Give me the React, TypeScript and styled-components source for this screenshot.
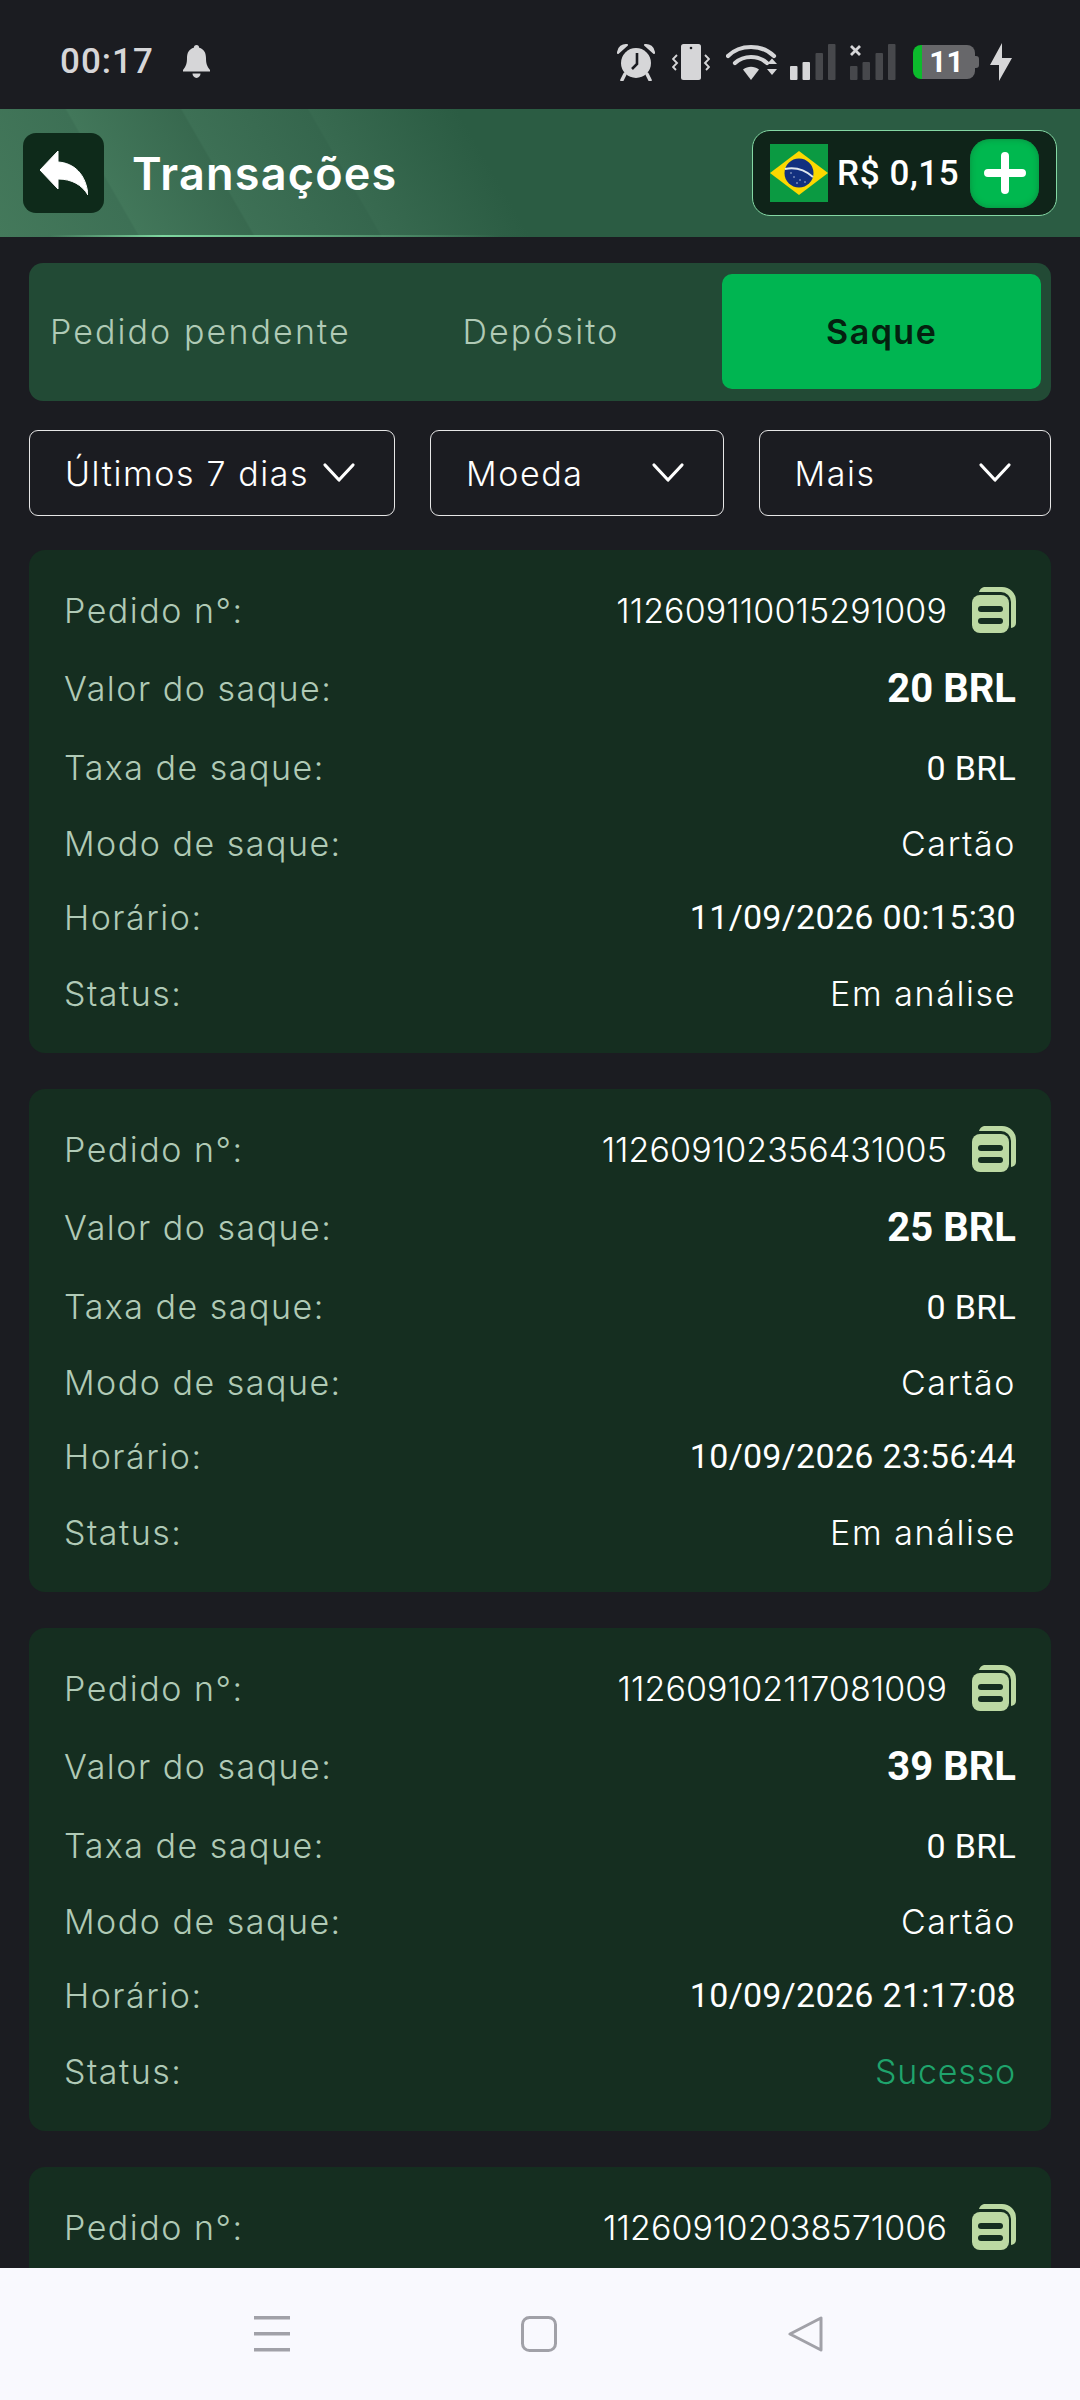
import React from 'react';
import styled, { createGlobalStyle } from 'styled-components';

const UI_FONT = '"Inter", "Noto Sans", sans-serif';
const NUM_FONT = 'Roboto, "Liberation Sans", sans-serif';

const GlobalStyle = createGlobalStyle`
  html, body {
    margin: 0;
    padding: 0;
    background: #1b1c21;
  }
  * {
    box-sizing: border-box;
  }
`;

const Page = styled.div`
  width: 1080px;
  height: 2400px;
  display: flex;
  flex-direction: column;
  overflow: hidden;
  background: #1b1c21;
  font-family: ${UI_FONT};
`;

const StatusBar = styled.div`
  height: 109px;
  flex: none;
  display: flex;
  align-items: center;
  justify-content: space-between;
  padding: 14px 68px 0 60px;
  color: #d6d6d8;
`;

const StatusLeft = styled.div`
  display: flex;
  align-items: center;
  gap: 29px;
`;

const Clock = styled.span`
  font-family: ${NUM_FONT};
  font-weight: 500;
  font-size: 35px;
  letter-spacing: 1px;
`;

const StatusIcons = styled.div`
  display: flex;
  align-items: center;
`;

const StatusSlot = styled.span<{ $left?: number }>`
  display: flex;
  margin-left: ${(p) => p.$left ?? 0}px;
`;

const BatteryBox = styled.div`
  position: relative;
  width: 62px;
  height: 34px;
  border-radius: 8px;
  background: linear-gradient(90deg, #0cbb2c 0, #0cbb2c 9px, #67676a 9px);
  display: flex;
  align-items: center;
  justify-content: center;
  margin-right: 3px;
  color: #fff;
  font-family: ${NUM_FONT};
  font-weight: 700;
  font-size: 30px;
  padding-left: 5px;

  &::after {
    content: '';
    position: absolute;
    right: -4px;
    top: 11px;
    width: 4px;
    height: 12px;
    border-radius: 0 3px 3px 0;
    background: #67676a;
  }
`;

const Header = styled.div`
  position: relative;
  height: 128px;
  flex: none;
  display: flex;
  align-items: center;
  justify-content: space-between;
  padding: 0 23px;
  background: linear-gradient(60deg,
    #44795b 0,
    #3d7055 12%,
    #42775a 12.2%,
    #38694f 22%,
    #3d7055 22.2%,
    #35664d 33%,
    #386a50 33.2%,
    #2b5c43 46%,
    #2b5c43 100%);

  &::after {
    content: '';
    position: absolute;
    left: 50px;
    bottom: 0;
    width: 450px;
    height: 2px;
    background: linear-gradient(90deg, transparent, #7fd6a0 25%, transparent);
  }
`;

const HeaderLeft = styled.div`
  display: flex;
  align-items: center;
  gap: 28px;
`;

const BackButton = styled.button`
  width: 81px;
  height: 80px;
  border: none;
  padding: 0;
  border-radius: 13px;
  background: #0e2a1a;
  display: flex;
  align-items: center;
  justify-content: center;
`;

const Title = styled.h1`
  margin: 0;
  color: #fff;
  font-size: 45px;
  font-weight: 600;
  letter-spacing: 1.2px;
`;

const Wallet = styled.div`
  width: 305px;
  height: 86px;
  display: flex;
  align-items: center;
  padding: 0 17px;
  border: 1.5px solid #84d8a4;
  border-radius: 18px;
  background: #0f2419;
`;

const WalletAmount = styled.span`
  flex: 1;
  margin-left: 9px;
  color: #fff;
  font-family: ${NUM_FONT};
  font-weight: 500;
  font-size: 35px;
  letter-spacing: 0.6px;
  white-space: nowrap;
`;

const PlusButton = styled.button`
  width: 69px;
  height: 69px;
  flex: none;
  border: none;
  padding: 0;
  border-radius: 20px;
  background: #00b84f;
  box-shadow: inset 0 0 6px #0b8a3f;
  display: flex;
  align-items: center;
  justify-content: center;
`;

const Content = styled.div`
  flex: 1;
  min-height: 0;
  overflow: hidden;
  padding: 26px 29px 0;
`;

const Tabs = styled.div`
  height: 138px;
  display: grid;
  grid-template-columns: repeat(3, 1fr);
  border-radius: 14px;
  background: #224a35;
`;

const TabItem = styled.div<{ $active?: boolean }>`
  margin: 11px 10px 12px 12px;
  display: flex;
  align-items: center;
  justify-content: center;
  border-radius: 10px;
  white-space: nowrap;
  font-size: 34px;
  font-weight: ${(p) => (p.$active ? 600 : 300)};
  letter-spacing: ${(p) => (p.$active ? 1.5 : 2.1)}px;
  color: ${(p) => (p.$active ? '#04210f' : '#b0cab6')};
  background: ${(p) => (p.$active ? '#00b551' : 'transparent')};
`;

const Filters = styled.div`
  margin-top: 29px;
  display: grid;
  grid-template-columns: 366px 293.5px 292.5px;
  gap: 35px;
`;

const Filter = styled.div`
  height: 86px;
  display: flex;
  align-items: center;
  justify-content: space-between;
  padding: 0 38px 0 35px;
  border: 1px solid #e6e6e6;
  border-radius: 9px;
  color: #fff;
  font-size: 34px;
  font-weight: 300;
  letter-spacing: 1.6px;
  white-space: nowrap;
`;

const CardList = styled.div`
  margin-top: 34px;
  display: flex;
  flex-direction: column;
  gap: 36px;
`;

const Card = styled.div`
  flex: none;
  height: 503px;
  padding: 21px 35px 20px;
  border-radius: 16px;
  background: #152e20;
`;

const Row = styled.div<{ $height: number }>`
  height: ${(p) => p.$height}px;
  display: flex;
  align-items: center;
  justify-content: space-between;
`;

const Label = styled.span`
  color: #b0cab6;
  font-size: 34px;
  font-weight: 300;
  letter-spacing: 1.5px;
  white-space: nowrap;
`;

const OrderCell = styled.span`
  display: flex;
  align-items: center;
  gap: 25px;
`;

const OrderId = styled.span`
  color: #fff;
  font-size: 34px;
  font-weight: 300;
  letter-spacing: 0.1px;
  white-space: nowrap;
`;

const Value = styled.span<{ $kind?: 'amount' | 'number' | 'success' }>`
  white-space: nowrap;
  color: ${(p) => (p.$kind === 'success' ? '#1fa46c' : '#fff')};
  font-family: ${(p) => (p.$kind === 'amount' || p.$kind === 'number' ? NUM_FONT : UI_FONT)};
  font-size: ${(p) => (p.$kind === 'amount' ? 40 : 34)}px;
  font-weight: ${(p) => (p.$kind === 'amount' ? 700 : p.$kind === 'number' ? 400 : 300)};
  letter-spacing: ${(p) => (p.$kind === 'amount' ? 0 : p.$kind === 'number' ? 0.3 : p.$kind === 'success' ? 0.8 : 1.6)}px;
`;

const NavBar = styled.div`
  height: 132px;
  flex: none;
  display: flex;
  align-items: center;
  justify-content: center;
  gap: 231px;
  padding: 0 2px 0 0;
  background: #f9f9fe;
`;

function Chevron() {
  return (
    <svg width="34" height="22" viewBox="0 0 34 22" fill="none" stroke="#fff" strokeWidth="3.2" strokeLinecap="round" strokeLinejoin="round">
      <path d="M3 3l14 15L31 3" />
    </svg>
  );
}

function CopyIcon() {
  return (
    <svg width="44" height="46" viewBox="0 0 44 46">
      <path d="M12 0h18a14 14 0 0 1 14 14v22a5 5 0 0 1-5 5V15A10 10 0 0 0 29 5H7a7 7 0 0 1 5-5z" fill="#bcd9a3" />
      <rect x="0" y="8" width="37" height="38" rx="8" fill="#bcd9a3" />
      <rect x="6" y="19" width="25" height="6" rx="3" fill="#152e20" />
      <rect x="6" y="31" width="25" height="6" rx="3" fill="#152e20" />
    </svg>
  );
}

function BrazilFlag() {
  return (
    <svg width="58" height="58" viewBox="0 0 58 58" style={{ flex: 'none' }}>
      <rect width="58" height="58" fill="#0b9a42" />
      <path d="M29 7L58 29 29 51 0 29z" fill="#fcd800" />
      <circle cx="29" cy="29" r="14.5" fill="#12307f" />
      <path d="M15 25c10-2 20 1 28 8" fill="none" stroke="#dfe7ee" strokeWidth="2" />
      <g fill="#b8c6e0">
        <circle cx="24" cy="33" r="0.8" />
        <circle cx="30" cy="36" r="0.8" />
        <circle cx="35" cy="38" r="0.8" />
        <circle cx="27" cy="39" r="0.8" />
        <circle cx="21" cy="29" r="0.8" />
      </g>
    </svg>
  );
}

function BellIcon() {
  return (
    <svg width="27" height="33" viewBox="0 0 27 33" fill="#d6d6d8">
      <path d="M13.5 0c1.6 0 2.7 1.2 2.7 2.8C21 4 23 8 23 13c0 5 .8 8 4 12v1.6H0V25c3.2-4 4-7 4-12 0-5 2-9 6.8-10.2C10.8 1.2 11.9 0 13.5 0z" />
      <path d="M9.5 28.6h8c0 2.4-1.8 4.400-4 4.400s-4-2-4-4.400z" />
    </svg>
  );
}

function AlarmIcon() {
  return (
    <svg width="38" height="38" viewBox="0 0 38 38">
      <circle cx="19" cy="20" r="15" fill="#d6d6d8" />
      <path d="M1 9a8 8 0 0 1 9-7L1 10zM37 9a8 8 0 0 0-9-7l9 8z" fill="#d6d6d8" stroke="#d6d6d8" strokeWidth="2" strokeLinejoin="round" />
      <path d="M8 31l-3 6M30 31l3 6" stroke="#d6d6d8" strokeWidth="3.5" strokeLinecap="round" />
      <path d="M20 10v11l-5 5" fill="none" stroke="#1b1c21" strokeWidth="2.6" />
    </svg>
  );
}

function VibrateIcon() {
  return (
    <svg width="38" height="36" viewBox="0 0 38 36" fill="none">
      <rect x="9" y="0" width="20" height="36" rx="2.5" fill="#d6d6d8" />
      <circle cx="19" cy="4" r="1.3" fill="#1b1c21" />
      <path d="M5 11L1 15l4 4-4 4 3 3M33 11l4 4-4 4 4 4-3 3" stroke="#d6d6d8" strokeWidth="1.9" />
    </svg>
  );
}

function WifiIcon() {
  return (
    <svg width="52" height="36" viewBox="0 0 52 36" fill="none">
      <path d="M2 12C14 0 36 0 48 12" stroke="#d6d6d8" strokeWidth="4.2" strokeLinecap="round" />
      <path d="M9 19c9-8 23-8 32 0" stroke="#d6d6d8" strokeWidth="4.2" strokeLinecap="round" />
      <path d="M17 25.5c5-3.8 11-3.8 16 0L25 36z" fill="#d6d6d8" />
      <path d="M41 20l5-5.5 5 5.5zM41 25h10l-5 6z" fill="#d6d6d8" />
    </svg>
  );
}

function SignalIcon({ active, cross }: { active: number; cross?: boolean }) {
  const bars = [
    { x: 0, h: 14 },
    { x: 12.5, h: 18 },
    { x: 25.5, h: 27 },
    { x: 38, h: 36 },
  ];
  return (
    <svg width="46" height="36" viewBox="0 0 46 36">
      {bars.map((bar, i) => (
        <rect
          key={bar.x}
          x={bar.x}
          y={36 - bar.h}
          width="7.5"
          height={bar.h}
          rx="1"
          fill={i < active ? '#d6d6d8' : '#47484c'}
        />
      ))}
      {cross && <path d="M1 2l9 9M10 2l-9 9" stroke="#d6d6d8" strokeWidth="2.8" />}
    </svg>
  );
}

function BoltIcon() {
  return (
    <svg width="22" height="38" viewBox="0 0 22 38" fill="#d6d6d8">
      <path d="M12 0v15h10L9 38V22H0z" />
    </svg>
  );
}

function HamburgerIcon() {
  return (
    <svg width="36" height="36" viewBox="0 0 36 36" fill="#a1a1a8">
      <rect y="0" width="36" height="3.5" />
      <rect y="16" width="36" height="3.5" />
      <rect y="32" width="36" height="3.5" />
    </svg>
  );
}

function HomeIcon() {
  return (
    <svg width="36" height="36" viewBox="0 0 36 36" fill="none" stroke="#a1a1a8" strokeWidth="3">
      <rect x="1.5" y="1.5" width="33" height="33" rx="7" />
    </svg>
  );
}

function NavBackIcon() {
  return (
    <svg width="36" height="36" viewBox="0 0 36 36" fill="none" stroke="#a1a1a8" strokeWidth="3" strokeLinejoin="round">
      <path d="M33 2v32L2 18z" />
    </svg>
  );
}

interface ITransaction {
  id: string;
  amount?: string;
  time?: string;
  status?: string;
}

// the last card runs under the nav bar, only its first row shows
const transactions: ITransaction[] = [
  { id: '112609110015291009', amount: '20 BRL', time: '11/09/2026 00:15:30', status: 'Em análise' },
  { id: '112609102356431005', amount: '25 BRL', time: '10/09/2026 23:56:44', status: 'Em análise' },
  { id: '112609102117081009', amount: '39 BRL', time: '10/09/2026 21:17:08', status: 'Sucesso' },
  { id: '112609102038571006' },
];

function TransactionCard({ id, amount, time, status }: ITransaction) {
  return (
    <Card>
      <Row $height={78}>
        <Label>Pedido n°:</Label>
        <OrderCell>
          <OrderId>{id}</OrderId>
          <CopyIcon />
        </OrderCell>
      </Row>
      {amount && (
        <>
          <Row $height={79}>
            <Label>Valor do saque:</Label>
            <Value $kind="amount">{amount}</Value>
          </Row>
          <Row $height={79}>
            <Label>Taxa de saque:</Label>
            <Value $kind="number">0 BRL</Value>
          </Row>
          <Row $height={73}>
            <Label>Modo de saque:</Label>
            <Value>Cartão</Value>
          </Row>
          <Row $height={74}>
            <Label>Horário:</Label>
            <Value $kind="number">{time}</Value>
          </Row>
          <Row $height={78}>
            <Label>Status:</Label>
            <Value $kind={status === 'Sucesso' ? 'success' : undefined}>{status}</Value>
          </Row>
        </>
      )}
    </Card>
  );
}

export default function App() {
  return (
    <Page>
      <GlobalStyle />
      <StatusBar>
        <StatusLeft>
          <Clock>00:17</Clock>
          <BellIcon />
        </StatusLeft>
        <StatusIcons>
          <StatusSlot><AlarmIcon /></StatusSlot>
          <StatusSlot $left={17}><VibrateIcon /></StatusSlot>
          <StatusSlot $left={16}><WifiIcon /></StatusSlot>
          <StatusSlot $left={12}><SignalIcon active={2} /></StatusSlot>
          <StatusSlot $left={14}><SignalIcon active={0} cross /></StatusSlot>
          <StatusSlot $left={17}><BatteryBox>11</BatteryBox></StatusSlot>
          <StatusSlot $left={12}><BoltIcon /></StatusSlot>
        </StatusIcons>
      </StatusBar>

      <Header>
        <HeaderLeft>
          <BackButton>
            <svg width="48" height="44" viewBox="0 0 48 44" fill="#fff">
              <path d="M18 0v11c16 1 28 12 30 33-6-10-16-16-30-16v10L0 19z" stroke="#fff" strokeWidth="1" strokeLinejoin="round" />
            </svg>
          </BackButton>
          <Title>Transações</Title>
        </HeaderLeft>
        <Wallet>
          <BrazilFlag />
          <WalletAmount>R$ 0,15</WalletAmount>
          <PlusButton>
            <svg width="42" height="42" viewBox="0 0 42 42" stroke="#fff" strokeWidth="8" strokeLinecap="round">
              <path d="M21 4v34M4 21h34" />
            </svg>
          </PlusButton>
        </Wallet>
      </Header>

      <Content>
        <Tabs>
          <TabItem>Pedido pendente</TabItem>
          <TabItem>Depósito</TabItem>
          <TabItem $active>Saque</TabItem>
        </Tabs>

        <Filters>
          <Filter>Últimos 7 dias<Chevron /></Filter>
          <Filter>Moeda<Chevron /></Filter>
          <Filter>Mais<Chevron /></Filter>
        </Filters>

        <CardList>
          {transactions.map((item) => (
            <TransactionCard key={item.id} {...item} />
          ))}
        </CardList>
      </Content>

      <NavBar>
        <HamburgerIcon />
        <HomeIcon />
        <NavBackIcon />
      </NavBar>
    </Page>
  );
}
